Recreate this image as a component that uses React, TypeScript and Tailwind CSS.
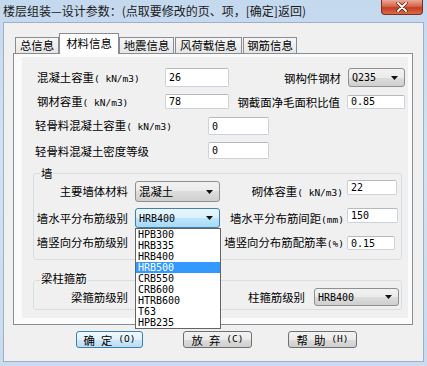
import React from "react";

const cn = "font-['Noto_Sans_CJK_SC',sans-serif]";
const mono = "font-['DejaVu_Sans_Mono',monospace]";

const Small = ({ children }: { children: React.ReactNode }) => (
  <span className={`${mono} text-[9.5px]`}>{children}</span>
);

const Label = ({
  className = "",
  children,
}: {
  className?: string;
  children: React.ReactNode;
}) => (
  <div className={`${cn} text-[11.4px] leading-[14px] text-black whitespace-nowrap ${className}`}>
    {children}
  </div>
);

const Field = ({ className = "", value }: { className?: string; value: string }) => (
  <div
    className={`bg-white border border-[#cdd2d9] border-t-[#b5b9c0] rounded-[2px] flex items-center pl-[3px] ${mono} text-[10px] text-black ${className}`}
  >
    {value}
  </div>
);

const Arrow = () => (
  <svg width="7" height="4" viewBox="0 0 7 4" className="shrink-0">
    <path d="M0 0h7L3.5 4z" fill="#111" />
  </svg>
);

const Combo = ({
  className = "",
  value,
  focused = false,
  cjk = false,
}: {
  className?: string;
  value: string;
  focused?: boolean;
  cjk?: boolean;
}) => (
  <div
    className={`flex items-center justify-between pl-[3px] pr-[6px] rounded-[3px] border ${
      focused
        ? "border-[#3c7fb1] bg-[linear-gradient(#eaf6fd,#d9f0fc_50%,#bee6fd_50%,#a7d9f5)]"
        : "border-[#8e8f8f] bg-[linear-gradient(#f2f2f2,#ebebeb_50%,#dddddd_50%,#cfcfcf)]"
    } ${className}`}
  >
    <span className={cjk ? `${cn} text-[11.4px]` : `${mono} text-[10px]`}>{value}</span>
    <Arrow />
  </div>
);

const Btn = ({
  className = "",
  chars,
  hot,
  primary = false,
}: {
  className?: string;
  chars: string[];
  hot: string;
  primary?: boolean;
}) => (
  <div
    className={`h-[17px] flex items-center justify-center gap-[6px] rounded-[3px] border ${
      primary
        ? "border-[#3c7fb1] bg-[linear-gradient(#f0f8fd,#e0f1fb_50%,#cfe8f7_50%,#bcdcf0)]"
        : "border-[#707070] bg-[linear-gradient(#f2f2f2,#ebebeb_50%,#dddddd_50%,#cfcfcf)]"
    } ${className}`}
  >
    {chars.map((c) => (
      <span key={c} className={`${cn} text-[11.4px] leading-[14px]`}>
        {c}
      </span>
    ))}
    <Small>({hot})</Small>
  </div>
);

export default function App() {
  const tabs = [
    { t: "总信息", w: "w-[44px]" },
    { t: "材料信息", w: "w-[60px]", sel: true },
    { t: "地震信息", w: "w-[55px]" },
    { t: "风荷载信息", w: "w-[67px] ml-[1px]" },
    { t: "钢筋信息", w: "w-[54px] ml-[1px]" },
  ];
  const grades = ["HPB300", "HRB335", "HRB400", "HRB500", "CRB550", "CRB600", "HTRB600", "T63", "HPB235"];

  return (
    <div className="relative w-[427px] h-[366px] overflow-hidden bg-[linear-gradient(#c4d8ee,#d3e2f3_40%,#c9dbef)]">
      {/* title bar */}
      <div className="flex justify-between items-start h-[22px]">
        <div className={`${cn} ml-[3px] mt-[4px] text-[12px] leading-[14px] text-[#1a1a1a] whitespace-nowrap`}>
          楼层组装—设计参数：(点取要修改的页、项，[确定]返回)
        </div>
        <div className="mr-[4px] w-[42px] h-[15px] rounded-b-[4px] border border-t-0 border-[#7b2d1e] bg-[linear-gradient(#e9a996,#d6644c_45%,#c63d22_55%,#d96a4a)] flex items-center justify-center">
          <svg width="12" height="10" viewBox="0 0 12 10">
            <path d="M2 1l8 8M10 1l-8 8" stroke="#5a2418" strokeWidth="3.4" strokeLinecap="round" />
            <path d="M2 1l8 8M10 1l-8 8" stroke="#fff" strokeWidth="1.8" strokeLinecap="round" />
          </svg>
        </div>
      </div>

      {/* client area */}
      <div className="mx-[3px] w-[421px] h-[340px] border border-[#9fb0c4] bg-[#f0f0f0]">
        <div className="pl-[9px] pt-[10px]">
          {/* tabs */}
          <div className="flex items-end h-[20px] pl-[2px]">
            {tabs.map((tab, i) => (
              <div
                key={i}
                className={`${tab.w} ${cn} text-[11.4px] text-black flex justify-center border border-b-0 border-[#898c95] ${
                  tab.sel
                    ? "h-[21px] -mb-[1px] relative z-10 bg-white pt-[1px] items-start"
                    : "h-[16px] items-center bg-[linear-gradient(#f6f6f6,#e6e6e6)]"
                }`}
              >
                {tab.t}
              </div>
            ))}
          </div>

          {/* tab panel */}
          <div className="w-[400px] h-[272px] border border-[#898c95] bg-[#fbfbfb] pt-[3px] pl-[8px]">
            <div className="w-[386px] h-[261px] bg-[#f0f0f0] flex flex-col">
              <div className="flex items-center mt-[11px] h-[19px]">
                <Label className="w-[143px] pl-[15px]">
                  混凝土容重<Small>( kN/m3)</Small>
                </Label>
                <Field className="w-[64px] h-[19px]" value="26" />
                <Label className="w-[112px] text-right">钢构件钢材</Label>
                <Combo className="ml-[7px] w-[57px] h-[19px]" value="Q235" />
              </div>

              <div className="flex items-center mt-[7px] h-[15px]">
                <Label className="w-[143px] pl-[15px]">
                  钢材容重<Small>( kN/m3)</Small>
                </Label>
                <Field className="w-[64px] h-[15px]" value="78" />
                <Label className="w-[111px] text-right">钢截面净毛面积比值</Label>
                <Field className="ml-[7px] w-[58px] h-[14px]" value="0.85" />
              </div>

              <div className="flex items-center mt-[8px] h-[18px]">
                <Label className="w-[186px] pl-[13px]">
                  轻骨料混凝土容重<Small>( kN/m3)</Small>
                </Label>
                <Field className="w-[61px] h-[18px]" value="0" />
              </div>

              <div className="flex items-center mt-[7px] h-[17px]">
                <Label className="w-[186px] pl-[13px]">轻骨料混凝土密度等级</Label>
                <Field className="w-[61px] h-[17px]" value="0" />
              </div>

              {/* 墙 */}
              <div className="mt-[14px] ml-[11px] w-[369px] h-[87px] shrink-0 border border-[#d5dfe5] rounded-[3px]">
                <Label className="-mt-[8px] ml-[6px] w-fit px-[1px] bg-[#f0f0f0]">墙</Label>
                <div className="flex items-start h-[22px]">
                  <Label className="w-[94px] text-right mt-[4px]">主要墙体材料</Label>
                  <Combo className="ml-[7px] mt-[1px] w-[85px] h-[21px]" value="混凝土" cjk />
                  <Label className="w-[123px] text-right mt-[4px]">
                    砌体容重<Small>( kN/m3)</Small>
                  </Label>
                  <Field className="ml-[4px] w-[50px] h-[15px]" value="22" />
                </div>
                <div className="flex items-start h-[20px] mt-[6px]">
                  <Label className="w-[94px] text-right mt-[3px]">墙水平分布筋级别</Label>
                  <Combo className="ml-[7px] w-[85px] h-[20px]" value="HRB400" focused />
                  <Label className="w-[124px] text-right mt-[3px]">
                    墙水平分布筋间距<Small>(mm)</Small>
                  </Label>
                  <Field className="ml-[3px] w-[51px] h-[15px]" value="150" />
                </div>
                <div className="flex items-start h-[20px] mt-[4px]">
                  <Label className="w-[94px] text-right mt-[3px]">墙竖向分布筋级别</Label>
                  {/* combo hidden under the open list */}
                  <div className="ml-[7px] w-[85px] h-[20px]" />
                  <Label className="w-[124px] text-right mt-[3px]">
                    墙竖向分布筋配筋率<Small>(%)</Small>
                  </Label>
                  <Field className="ml-[3px] mt-[4px] w-[48px] h-[14px]" value="0.15" />
                </div>
              </div>

              {/* 梁柱箍筋 */}
              <div className="mt-[20px] ml-[11px] w-[369px] h-[30px] shrink-0 border border-[#d5dfe5] rounded-[3px]">
                <Label className="-mt-[10px] ml-[6px] w-fit px-[1px] bg-[#f0f0f0]">梁柱箍筋</Label>
                <div className="flex items-center h-[18px] mt-[3px]">
                  <Label className="w-[94px] text-right">梁箍筋级别</Label>
                  <div className="ml-[7px] w-[85px] h-[18px]" />
                  <Label className="w-[85px] text-right">柱箍筋级别</Label>
                  <Combo className="ml-[9px] w-[85px] h-[18px]" value="HRB400" />
                </div>
              </div>
            </div>
          </div>

          {/* buttons */}
          <div className="flex mt-[6px]">
            <Btn className="ml-[63px] w-[67px]" chars={["确", "定"]} hot="O" primary />
            <Btn className="ml-[40px] w-[69px]" chars={["放", "弃"]} hot="C" />
            <Btn className="ml-[36px] w-[69px]" chars={["帮", "助"]} hot="H" />
          </div>
        </div>
      </div>

      {/* open drop-down list */}
      <div className="absolute left-[135px] top-[228px] w-[86px] h-[101px] bg-white border border-[#646464] z-20">
        {grades.map((g) => (
          <div
            key={g}
            className={`h-[11px] leading-[11px] pl-[2px] ${mono} text-[10px] ${
              g === "HRB500" ? "bg-[#3399ff] text-white" : "text-black"
            }`}
          >
            {g}
          </div>
        ))}
      </div>
    </div>
  );
}
